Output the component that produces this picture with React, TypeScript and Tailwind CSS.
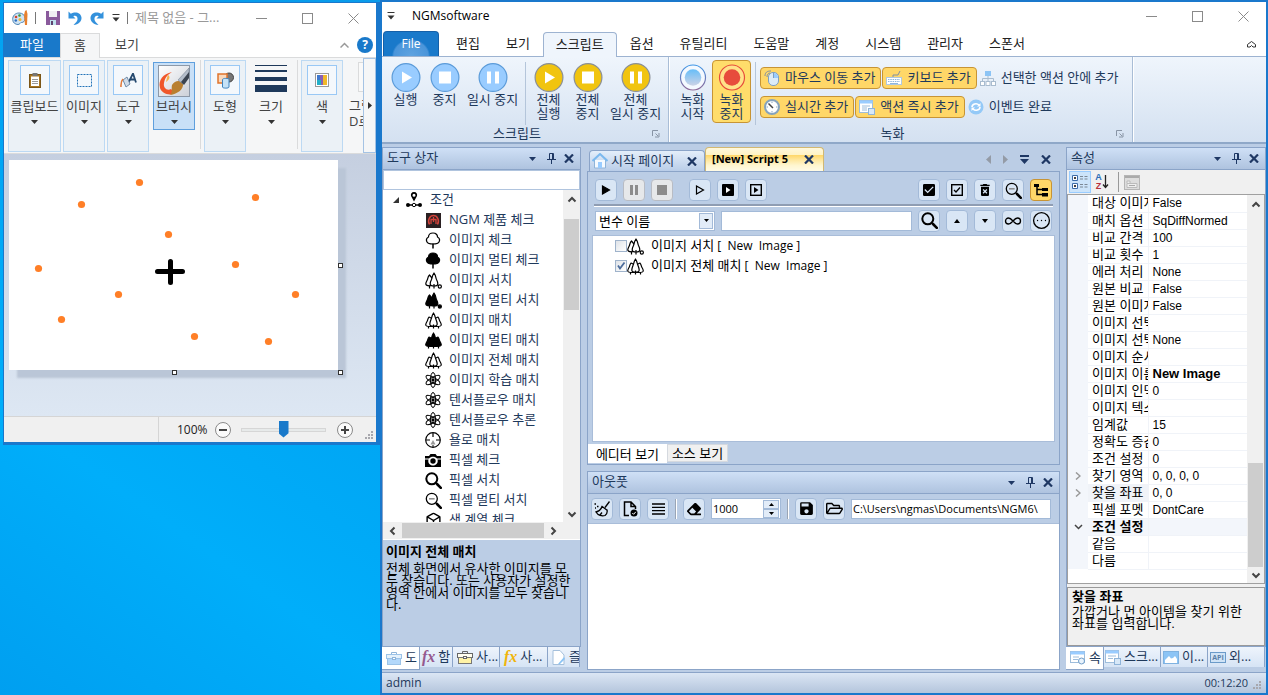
import { useState } from "react";
import type { ReactNode } from "react";
import {
  Box,
  CircleEllipsis,
  Infinity as InfinityIcon,
} from "lucide-react";
import { MdCheckBox, MdDeleteForever, MdSave } from "react-icons/md";
import { FaEraser, FaRegFolderOpen } from "react-icons/fa";

/* ---------- small shared glyphs ---------- */

function CaretDown({ className = "text-[#333]" }: { className?: string }) {
  return (
    <svg width="7" height="4" viewBox="0 0 7 4" className={className}>
      <path d="M0 0H7L3.500 4Z" fill="currentColor" />
    </svg>
  );
}

function QuickAccessArrow() {
  return (
    <svg width="8" height="8" viewBox="0 0 8 8">
      <path d="M0.500 0.500H7.500" stroke="#333" />
      <path d="M0.500 3.500H7.500L4 7.500Z" fill="#333" />
    </svg>
  );
}

function CloseX() {
  return (
    <svg width="10" height="9" viewBox="0 0 10 9">
      <path d="M1 0.500L9 8.500M9 0.500L1 8.500" stroke="#1f3864" strokeWidth="2.200" />
    </svg>
  );
}

function PinIcon() {
  return (
    <svg width="9" height="11" viewBox="0 0 9 11">
      <path d="M2.500 0.500H6.500V6M2.500 0.500V6M0 6.500H9M4.500 7V11M5.500 1V6" stroke="#1f3864" fill="none" />
    </svg>
  );
}

function Chevron({ dir }: { dir: "up" | "down" | "left" | "right" }) {
  const paths = {
    up: "M1.500 6.500L5 3L8.500 6.500",
    down: "M1.500 3.500L5 7L8.500 3.500",
    left: "M6.500 1.500L3 5L6.500 8.500",
    right: "M3.500 1.500L7 5L3.500 8.500",
  };
  return (
    <svg width="10" height="10" viewBox="0 0 10 10" className="flex-none">
      <path d={paths[dir]} fill="none" stroke="#444" strokeWidth="2" />
    </svg>
  );
}

function Magnifier({ minus }: { minus?: boolean }) {
  return (
    <svg width="17" height="17" viewBox="0 0 17 17">
      <circle cx="6.800" cy="6.800" r="5.500" fill="none" stroke="#000" strokeWidth={minus ? 1.3 : 2} />
      <path d="M11 11L12.500 12.500" stroke="#000" strokeWidth="1.500" />
      <path d="M12 12L15.800 15.800" stroke="#000" strokeWidth="2.600" strokeLinecap="round" />
      {minus && <path d="M4 6.800H9.600" stroke="#888" strokeWidth="1.500" />}
    </svg>
  );
}

function Grip() {
  return (
    <svg width="9" height="9" viewBox="0 0 9 9" className="flex-none">
      {[[6, 0], [3, 3], [6, 3], [0, 6], [3, 6], [6, 6]].map(([x, y]) => (
        <rect key={`${x}-${y}`} x={x} y={y} width="2" height="2" fill="#a7a7ad" />
      ))}
    </svg>
  );
}

function WindowButtons() {
  return (
    <div className="flex flex-none items-center">
      <button aria-label="Minimize" className="flex h-7 w-[46px] items-center justify-center">
        <svg width="11" height="11" viewBox="0 0 11 11"><path d="M0 5.500H11" stroke="#8a8a8a" /></svg>
      </button>
      <button aria-label="Maximize" className="flex h-7 w-[46px] items-center justify-center">
        <svg width="11" height="11" viewBox="0 0 11 11"><rect x="0.500" y="0.500" width="10" height="10" fill="none" stroke="#8a8a8a" /></svg>
      </button>
      <button aria-label="Close" className="flex h-7 w-[46px] items-center justify-center">
        <svg width="11" height="11" viewBox="0 0 11 11"><path d="M0.500 0.500L10.500 10.500M10.500 0.500L0.500 10.500" stroke="#8a8a8a" /></svg>
      </button>
    </div>
  );
}

/* ---------- paint window ---------- */

const dots = [
  [72, 44], [130, 22], [246, 37], [159, 74], [29, 108], [226, 104],
  [109, 134], [286, 134], [52, 159], [185, 176], [259, 181],
];

function PaintLogo() {
  return (
    <svg width="17" height="16" viewBox="0 0 17 16">
      <path d="M7 3C3 3 .5 6 .7 9.500C.8 13 3.500 14.500 6 14.500C8 14.500 8 12.500 9.500 12.500C11.500 12.500 13 11 13 8.500C13 5 10.500 3 7 3Z" fill="#cfe3f3" stroke="#4f86b5" />
      <circle cx="4" cy="7" r="1.300" fill="#d5452f" />
      <circle cx="7.500" cy="5.500" r="1.300" fill="#3c9a41" />
      <circle cx="3.800" cy="10.500" r="1.300" fill="#2d6fc4" />
      <circle cx="8" cy="9.500" r="1.500" fill="#f2b632" />
      <path d="M13 1L14.500 0L15.500 4L15 15H13L12 5Z" fill="#e8802e" />
    </svg>
  );
}

function UndoArrow({ flip }: { flip?: boolean }) {
  return (
    <svg width="14" height="14" viewBox="0 0 14 14" className={flip ? "-scale-x-100" : ""}>
      <path d="M0.500 0.500V7.500H7.500L5.300 5.300C7.500 4 10 5.500 9.500 8.500C9.200 10.500 7.500 12 5.500 14C10.500 13.500 13.800 10.500 13.500 6.500C13 1.500 7 0 2.800 2.800Z" fill="#3391dc" />
    </svg>
  );
}

function PaintTool({ label, active, wide, children }: { label: string; active?: boolean; wide?: boolean; children: ReactNode }) {
  return (
    <button
      className={`flex flex-none flex-col items-center border text-[#444] ${wide ? "w-[53px]" : "w-[42px]"} ${
        active
          ? "mx-[2px] mt-[2px] h-[68px] border-[#5f9fdd] bg-[#c9e0f7] pt-[2px]"
          : "h-[92px] border-[#bcd9f3] bg-[#ebf1f6] pt-1"
      }`}
    >
      {children}
      <span className={`block leading-[18px] whitespace-nowrap ${active ? "" : "mt-[2px]"}`}>{label}</span>
      <span className="mt-[5px] block">
        <CaretDown />
      </span>
    </button>
  );
}

function ToolBox({ children }: { children: ReactNode }) {
  return (
    <span className="flex h-[30px] w-[30px] items-center justify-center border border-[#99c8f5] bg-[#f4f8fc]">
      {children}
    </span>
  );
}

function PaintWindow() {
  const [zoom, setZoom] = useState(50);

  return (
    <section className="flex h-[443px] flex-col border-t border-r-4 border-b-3 border-l border-[#1a78cc] bg-white">
      <div className="flex h-[30px] flex-none items-center pl-2">
        <PaintLogo />
        <span className="ml-[6px] h-3 w-px bg-[#777]" />
        <svg width="14" height="14" viewBox="0 0 14 14" className="ml-[10px]">
          <path d="M0 0H14V14H0Z" fill="#8a5a9c" />
          <path d="M3 0H11V6H3Z" fill="#f0edf3" />
          <path d="M4 9H10V14H4Z" fill="#bfe0ee" />
          <path d="M5 10H7V14H5Z" fill="#5d4470" />
        </svg>
        <span className="ml-2"><UndoArrow /></span>
        <span className="ml-2"><UndoArrow flip /></span>
        <span className="ml-2"><QuickAccessArrow /></span>
        <span className="ml-[7px] h-3 w-px bg-[#777]" />
        <span className="ml-[7px] flex-1 whitespace-nowrap text-[#999]">제목 없음 - 그...</span>
        <WindowButtons />
      </div>

      <div className="flex h-[25px] flex-none items-end border-b border-[#dadbdc]">
        <button className="h-6 w-[56px] bg-[#1979ca] pb-px text-white">파일</button>
        <button className="-mb-px h-[25px] w-10 border border-b-0 border-[#dadbdc] bg-[#f5f6f7] text-[#333]">홈</button>
        <button className="h-6 w-[54px] pb-px text-[#444]">보기</button>
        <span className="flex-1" />
        <span className="mr-2 mb-[9px]">
          <svg width="9" height="6" viewBox="0 0 9 6"><path d="M0.500 5.500L4.500 1.500L8.500 5.500" fill="none" stroke="#999" strokeWidth="1.500" /></svg>
        </span>
        <button aria-label="도움말" className="mr-[3px] mb-1 h-4 w-4 rounded-full bg-[#1979ca] text-xs leading-4 font-bold text-white">?</button>
      </div>

      <div className="flex h-24 flex-none overflow-hidden border-b border-[#dadbdc] bg-[#f5f6f7]">
        <div className="flex min-w-0 flex-1 gap-[2px] overflow-hidden pt-[2px] pl-1">
          <PaintTool label="클립보드" wide>
            <ToolBox>
              <svg width="12" height="15" viewBox="0 0 12 15">
                <rect x="0.500" y="1.500" width="11" height="13" fill="#a8741f" stroke="#7c5717" />
                <rect x="2" y="3.500" width="8" height="9.500" fill="#fff" />
                <path d="M3 6.500H9M3 8.500H9M3 10.500H9" stroke="#9a9a9a" />
                <rect x="3.500" y="0" width="5" height="3" fill="#777" />
              </svg>
            </ToolBox>
          </PaintTool>
          <PaintTool label="이미지">
            <ToolBox>
              <svg width="15" height="13" viewBox="0 0 15 13"><rect x="0.500" y="0.500" width="14" height="12" fill="none" stroke="#2273b8" strokeDasharray="2 1" /></svg>
            </ToolBox>
          </PaintTool>
          <PaintTool label="도구">
            <ToolBox>
              <svg width="17" height="15" viewBox="0 0 17 15">
                <path d="M8.500 9.500L13 0.500L16 9.500M10.500 6.500H15" stroke="#24496f" strokeWidth="1.800" fill="none" />
                <path d="M3 7L7 4L10 11L6 14Z" fill="#cfdbe8" stroke="#6f8ba8" />
                <path d="M3 6C1 8 .8 11 1 14" stroke="#e37a3a" strokeWidth="1.600" fill="none" />
              </svg>
            </ToolBox>
          </PaintTool>
          <PaintTool label="브러시" active>
            <svg width="32" height="32" viewBox="0 0 32 32">
              <defs>
                <linearGradient id="brushBg" x1="0" y1="0" x2="1" y2="1">
                  <stop offset="0" stopColor="#fff" />
                  <stop offset="1" stopColor="#ccd0d8" />
                </linearGradient>
              </defs>
              <rect x="0.500" y="0.500" width="31" height="31" fill="url(#brushBg)" stroke="#8c98a8" />
              <path d="M14 7C5 9 0 15 2 23C4 29 12 31 17 28L13 24C9 26 5 23 6 18C7 13 9 10 14 7Z" fill="#f0572b" />
              <path d="M10 10C13 12 11 15 8 17C9 13 9 12 10 10Z" fill="#f8b04a" />
              <path d="M14 20C17 15 22 15 25 18C26 24 20 29 12 30C15 27 13 24 14 20Z" fill="#b97f30" />
              <path d="M20 15L31 3V11L25 19Z" fill="#b4bdca" stroke="#6d7889" strokeWidth=".5" />
              <path d="M23 17L31 7V13L26 20Z" fill="#3b4451" />
            </svg>
          </PaintTool>
          <span className="mx-px mb-1 w-px flex-none bg-[#dadbdc]" />
          <PaintTool label="도형">
            <ToolBox>
              <svg width="17" height="17" viewBox="0 0 17 17">
                <circle cx="12" cy="5.500" r="4.500" fill="#777" stroke="#444" />
                <rect x="1" y="2" width="9" height="9" fill="#f9d9bd" stroke="#e0742c" strokeWidth="1.500" />
                <path d="M5.500 7.500C5.500 6 12 6 12 7.500V15C12 16.500 5.500 16.500 5.500 15Z" fill="#c5e2f7" stroke="#3f83bd" />
              </svg>
            </ToolBox>
          </PaintTool>
          <button className="flex h-[92px] w-[46px] flex-none flex-col items-center pt-1 text-[#444]">
            <svg width="32" height="29" viewBox="0 0 32 29">
              <path d="M0 1H32V2H0ZM0 6H32V8H0ZM0 13H32V17H0ZM0 21H32V28H0Z" fill="#1e395b" />
            </svg>
            <span className="mt-1 block leading-[18px]">크기</span>
            <span className="mt-[5px] block"><CaretDown /></span>
          </button>
          <span className="mx-px mb-1 w-px flex-none bg-[#dadbdc]" />
          <PaintTool label="색">
            <ToolBox>
              <svg width="14" height="14" viewBox="0 0 14 14">
                <rect x="0.500" y="0.500" width="13" height="13" fill="#fff" stroke="#999" />
                <path d="M2 2H5V11H2Z" fill="#3f79cf" />
                <path d="M5 2H8V12H5Z" fill="#8b5fb3" />
                <path d="M8 2H12V12H8Z" fill="#f0b92a" />
                <path d="M2 7H6V12H2Z" fill="#22b0c9" />
              </svg>
            </ToolBox>
          </PaintTool>
          <button className="mt-[2px] ml-1 flex w-[50px] flex-none flex-col items-start text-left leading-4 text-[#444]">
            <span className="ml-[9px] h-[30px] w-[30px] border border-[#dadbdc] bg-[#f9f9f9]" />
            <span className="mt-[5px]">그림판</span>
            <span>D로</span>
          </button>
        </div>
        <button aria-label="다음" className="flex w-[13px] flex-none items-center justify-center border border-[#a5c3e4] bg-[#f5f6f7]">
          <svg width="4" height="7" viewBox="0 0 4 7"><path d="M0 0L4 3.500L0 7Z" fill="#333" /></svg>
        </button>
      </div>

      <div className="min-h-0 flex-1 bg-linear-to-b from-[#c5cfe0] to-[#dde7f3] pt-[6px] pl-[5px]">
        <div className="relative w-[329px] bg-white shadow-[8px_8px_2px_#bac6d7]">
          <svg width="329" height="210" viewBox="0 0 329 210" className="block">
            <rect width="329" height="210" fill="#fff" />
            {dots.map(([x, y]) => (
              <circle key={`${x}-${y}`} cx={x + 0.5} cy={y + 0.5} r="3.600" fill="#ff7f27" />
            ))}
            <path d="M148.500 111.500H173.500M161.500 101.500V122.500" stroke="#000" strokeWidth="5" strokeLinecap="round" />
          </svg>
          <span className="absolute top-[103px] -right-[5px] h-[5px] w-[5px] border border-[#333] bg-white" />
          <span className="absolute -right-[5px] -bottom-[5px] h-[5px] w-[5px] border border-[#333] bg-white" />
          <span className="absolute -bottom-[5px] left-[163px] h-[5px] w-[5px] border border-[#333] bg-white" />
        </div>
      </div>

      <div className="flex h-[26px] flex-none items-center border-t border-[#d5d5d5] bg-[#f0f0f0]">
        <span className="w-[154px] flex-none" />
        <span className="h-full w-px bg-[#d5d5d5]" />
        <span className="ml-[18px] w-[38px] text-xs text-[#222]">100%</span>
        <button aria-label="축소">
          <svg width="16" height="16" viewBox="0 0 16 16">
            <circle cx="8" cy="8" r="7.500" fill="#fafafa" stroke="#8a8a8a" />
            <path d="M4 8H12" stroke="#444" strokeWidth="2" />
          </svg>
        </button>
        <input
          type="range"
          aria-label="확대/축소"
          value={zoom}
          onChange={(e) => setZoom(Number(e.target.value))}
          className="ml-[10px] h-[18px] w-[85px] appearance-none bg-transparent [&::-webkit-slider-runnable-track]:h-1 [&::-webkit-slider-runnable-track]:border [&::-webkit-slider-runnable-track]:border-[#d6d6d6] [&::-webkit-slider-runnable-track]:bg-[#e7eaea] [&::-webkit-slider-thumb]:-mt-2 [&::-webkit-slider-thumb]:h-[17px] [&::-webkit-slider-thumb]:w-[10px] [&::-webkit-slider-thumb]:appearance-none [&::-webkit-slider-thumb]:bg-[#1979ca] [&::-webkit-slider-thumb]:[clip-path:polygon(0_0,100%_0,100%_75%,50%_100%,0_75%)]"
        />
        <button aria-label="확대" className="ml-[11px]">
          <svg width="16" height="16" viewBox="0 0 16 16">
            <circle cx="8" cy="8" r="7.500" fill="#fafafa" stroke="#8a8a8a" />
            <path d="M4 8H12M8 4V12" stroke="#444" strokeWidth="2" />
          </svg>
        </button>
        <span className="flex-1" />
        <span className="mr-[2px] self-end pb-[2px]"><Grip /></span>
      </div>
    </section>
  );
}

/* ---------- ribbon ---------- */

const menuTabs = ["편집", "보기", "스크립트", "옵션", "유틸리티", "도움말", "계정", "시스템", "관리자", "스폰서"];

type Shape = "play" | "stop" | "pause";

function RoundIcon({ shape, yellow }: { shape: Shape; yellow?: boolean }) {
  return (
    <svg width="30" height="29" viewBox="0 0 30 29" className="flex-none">
      <circle cx="15" cy="14.500" r="13.900" fill={yellow ? "#f1c40f" : "#99ccff"} stroke={yellow ? "#8a8f96" : "#5b9bd9"} strokeWidth="1.200" />
      {shape === "play" && <path d="M11 8.500L21 14.500L11 20.500Z" fill="#fff" />}
      {shape === "stop" && <rect x="9" y="8.500" width="12" height="12" fill="#fff" />}
      {shape === "pause" && <path d="M9 8.500H13V20.500H9ZM17 8.500H21V20.500H17Z" fill="#fff" />}
    </svg>
  );
}

function RecordIcon({ on }: { on?: boolean }) {
  return (
    <svg width="30" height="29" viewBox="0 0 30 29" className="flex-none">
      <defs>
        <linearGradient id="recIdle" x1="0" y1="0" x2="0" y2="1">
          <stop offset="0" stopColor="#66bdf8" />
          <stop offset="1" stopColor="#cdd3e6" />
        </linearGradient>
        <linearGradient id="recRing" x1="0" y1="0" x2="0" y2="1">
          <stop offset="0" stopColor="#3f97e8" />
          <stop offset="1" stopColor="#8f6796" />
        </linearGradient>
      </defs>
      <circle cx="15" cy="14.500" r="12.500" fill={on ? "#ffe289" : "#f4f9ff"} stroke={on ? "#e74c3c" : "url(#recRing)"} strokeWidth="1.200" />
      <circle cx="15" cy="14.500" r="8.300" fill={on ? "#e74c3c" : "url(#recIdle)"} />
    </svg>
  );
}

function BigButton({ lines, wide, active, children }: { lines: string[]; wide?: boolean; active?: boolean; children: ReactNode }) {
  return (
    <button
      className={`flex h-[63px] flex-none flex-col items-center rounded-sm border pt-[2px] leading-[14px] whitespace-nowrap text-[#1e395b] ${
        wide ? "w-[57px]" : "w-[39px]"
      } ${active ? "border-[#c79435] bg-[#ffdd6b]" : "border-transparent"}`}
    >
      {children}
      <span className="block">
        {lines.map((line) => (
          <span key={line} className="block">{line}</span>
        ))}
      </span>
    </button>
  );
}

function SmallButton({ label, active, children }: { label: string; active?: boolean; children: ReactNode }) {
  return (
    <button
      className={`flex h-[22px] flex-none items-center gap-[5px] rounded-sm border whitespace-nowrap text-[#1e395b] ${
        active ? "border-[#c79435] bg-[#ffd768] pr-[5px] pl-[3px]" : "border-transparent px-px"
      }`}
    >
      {children}
      {label}
    </button>
  );
}

function Launcher() {
  return (
    <button aria-label="옵션 더 보기">
      <svg width="8" height="8" viewBox="0 0 8 8">
        <path d="M0.500 6V0.500H6M3.500 3.500L6 6M7 3V7H3" fill="none" stroke="#8894a5" />
      </svg>
    </button>
  );
}

function Divider() {
  return <span className="mt-[2px] h-[63px] w-px flex-none bg-[#b4c5da]" />;
}

function Ribbon() {
  return (
    <div className="flex h-[87px] flex-none border-b-2 border-[#8fa8c8] bg-linear-to-b from-[#eff5fc] to-[#d4e1f1] text-[#1e395b]">
      <div className="flex w-[287px] flex-none flex-col border-r border-[#a9bdd6] shadow-[1px_0_0_#fff]">
        <div className="flex flex-1 pt-[3px] pl-1">
          <BigButton lines={["실행"]}><RoundIcon shape="play" /></BigButton>
          <BigButton lines={["중지"]}><RoundIcon shape="stop" /></BigButton>
          <BigButton lines={["일시 중지"]} wide><RoundIcon shape="pause" /></BigButton>
          <span className="w-1" />
          <Divider />
          <span className="w-[3px]" />
          <BigButton lines={["전체", "실행"]}><RoundIcon shape="play" yellow /></BigButton>
          <BigButton lines={["전체", "중지"]}><RoundIcon shape="stop" yellow /></BigButton>
          <BigButton lines={["전체", "일시 중지"]} wide><RoundIcon shape="pause" yellow /></BigButton>
        </div>
        <div className="flex h-[18px] items-center pr-2">
          <span className="flex-1 text-center">스크립트</span>
          <Launcher />
        </div>
      </div>

      <div className="flex w-[464px] flex-none flex-col border-r border-[#a9bdd6] shadow-[1px_0_0_#fff]">
        <div className="flex flex-1 pt-[3px] pl-1">
          <BigButton lines={["녹화", "시작"]}><RecordIcon /></BigButton>
          <BigButton lines={["녹화", "중지"]} active><RecordIcon on /></BigButton>
          <span className="w-1" />
          <Divider />
          <div className="flex flex-col gap-[7px] pt-[7px] pl-1">
            <div className="flex gap-px">
              <SmallButton label="마우스 이동 추가" active>
                <svg width="16" height="16" viewBox="0 0 16 16">
                  <rect x="4.500" y="2.500" width="10" height="13" rx="4.500" fill="#dcebf8" stroke="#7f9fc0" />
                  <path d="M9.500 3V8H14C14 5 12.500 3 9.500 3Z" fill="#99ccff" />
                  <path d="M9.500 2.500V8" stroke="#7f9fc0" />
                  <path d="M1 6C1 2.500 3 1 7 1M3 7C3 5 4 3 6 3" stroke="#7f8fa5" fill="none" />
                </svg>
              </SmallButton>
              <SmallButton label="키보드 추가" active>
                <svg width="16" height="16" viewBox="0 0 16 16">
                  <path d="M7 7V5H12L14 1" stroke="#7f8fa5" fill="none" />
                  <rect x="0.500" y="7.500" width="15" height="7" fill="#fff" stroke="#b0c8e0" />
                  <path d="M2 9.500H14M2 11.500H14" stroke="#8eb6dc" strokeDasharray="1.500 .8" />
                  <path d="M4 13.500H12" stroke="#8eb6dc" />
                </svg>
              </SmallButton>
              <SmallButton label="선택한 액션 안에 추가">
                <svg width="16" height="16" viewBox="0 0 16 16">
                  <rect x="5" y="1" width="6" height="5" fill="#8cc4f5" />
                  <path d="M8 6V9M2.500 11V8.500H13.500V11M8 9V11" stroke="#a9bccf" fill="none" />
                  <rect x="0.500" y="11.500" width="4" height="4" fill="#fff" stroke="#a9bccf" />
                  <rect x="6" y="11.500" width="4" height="4" fill="#fff" stroke="#a9bccf" />
                  <rect x="11.500" y="11.500" width="4" height="4" fill="#fff" stroke="#a9bccf" />
                </svg>
              </SmallButton>
            </div>
            <div className="flex gap-px">
              <SmallButton label="실시간 추가" active>
                <svg width="16" height="16" viewBox="0 0 16 16">
                  <circle cx="8" cy="8" r="7" fill="#fff" stroke="#86a3bd" strokeWidth="2" />
                  <path d="M4.500 4.500L9 9" stroke="#444" strokeWidth="1.500" />
                  <path d="M8 2.500V4M13.500 8H12M8 13.500V12M2.500 8H4" stroke="#86a3bd" />
                </svg>
              </SmallButton>
              <SmallButton label="액션 즉시 추가" active>
                <svg width="16" height="16" viewBox="0 0 16 16">
                  <rect x="0.500" y="1.500" width="13" height="12" fill="#fff" stroke="#9ebddb" />
                  <rect x="0.500" y="1.500" width="13" height="3" fill="#99ccff" />
                  <path d="M3 7H11M3 9H8M3 11H8" stroke="#9ebddb" />
                  <rect x="9.500" y="9.500" width="6" height="6" fill="#d7e8f8" stroke="#8fb4d9" />
                </svg>
              </SmallButton>
              <SmallButton label="이벤트 완료">
                <svg width="16" height="16" viewBox="0 0 16 16">
                  <circle cx="8" cy="8" r="7.500" fill="#94c9f7" />
                  <path d="M4 8C4 5 8.500 3.500 11 6M12 8C12 11 7.500 12.500 5 10" stroke="#fff" strokeWidth="1.600" fill="none" />
                  <path d="M12.500 4V7.500H9ZM3.500 12V8.500H7Z" fill="#fff" />
                </svg>
              </SmallButton>
            </div>
          </div>
        </div>
        <div className="flex h-[18px] items-center pr-2">
          <span className="flex-1 text-center">녹화</span>
          <Launcher />
        </div>
      </div>
    </div>
  );
}

/* ---------- docked panels ---------- */

function PanelHeader({ title }: { title: string }) {
  return (
    <div className="flex h-[22px] flex-none items-center border-b border-[#8ba4c8] bg-linear-to-b from-[#cfe0f6] to-[#afc3df] pr-[6px] pl-1 text-[#1e395b]">
      <span className="flex-1 pb-px">{title}</span>
      <button aria-label="메뉴" className="mr-[11px]"><CaretDown className="text-[#1f3864]" /></button>
      <button aria-label="고정" className="mr-2"><PinIcon /></button>
      <button aria-label="닫기"><CloseX /></button>
    </div>
  );
}

function Pines({ filled, mode }: { filled?: boolean; mode: "search" | "match" }) {
  const fill = filled ? "#000" : "#fff";
  return (
    <svg width="17" height="17" viewBox="0 0 17 17" className="flex-none">
      {mode === "search" ? (
        <g fill={fill} stroke="#000" strokeWidth="1.200" strokeLinejoin="round">
          <path d="M4.500 3C2.500 5 3.200 6 2.200 8C1.500 9.500 .8 10.500 .8 11.800C.8 13.200 2.500 13.800 4.500 13.800C6 13.800 7 13 7 12V6Z" />
          <path d="M4.500 13.500V16.500" />
          <path d="M9 1C6.800 4 7.500 5.500 6.500 7.500C5.700 9 5.200 10.500 5.200 12C5.200 13.500 7 14 9 14C11 14 12.800 13.500 12.800 12C12.800 10.500 12.300 9 11.500 7.500C10.500 5.500 11.200 4 9 1Z" />
          <path d="M9 12V16.500" />
          <circle cx="14.800" cy="14.500" r="1.600" />
        </g>
      ) : (
        <g fill={fill} stroke="#000" strokeWidth="1.200" strokeLinejoin="round">
          <path d="M4 5C2.500 7 3 8 2 9.500C1 11 .7 12 .7 13C1 14.500 3 14.500 5 14.500H8V7Z" />
          <path d="M13 5C14.500 7 14 8 15 9.500C16 11 16.300 12 16.300 13C16 14.500 14 14.500 12 14.500H9V7Z" />
          <path d="M8.500 1C6.500 4 7 5.500 6 7.500C5.200 9.500 4.800 10.500 4.800 12C4.800 13.800 6.500 14.200 8.500 14.200C10.500 14.200 12.200 13.800 12.200 12C12.200 10.500 11.800 9.500 11 7.500C10 5.500 10.500 4 8.500 1Z" />
          <path d="M8.500 12.500V16.500M3.500 14V16.500M13.500 14V16.500" />
        </g>
      )}
    </svg>
  );
}

function RoundTree({ filled }: { filled?: boolean }) {
  return (
    <svg width="16" height="17" viewBox="0 0 16 17">
      <path d="M8 1C5 1 3.500 3 3.500 5C1.500 6 1 8 2 10C3 12 6 12 8 12C10 12 13 12 14 10C15 8 14.500 6 12.500 5C12.500 3 11 1 8 1Z" fill={filled ? "#000" : "#fff"} stroke="#000" strokeWidth="1.200" />
      <path d="M8 11.500V16.500" stroke="#000" strokeWidth="1.500" />
    </svg>
  );
}

function AtomIcon() {
  return (
    <svg width="16" height="16" viewBox="0 0 16 16" fill="none" stroke="#000" strokeWidth="1">
      <ellipse cx="8" cy="8" rx="2.600" ry="7.500" />
      <ellipse cx="8" cy="8" rx="2.600" ry="7.800" transform="rotate(60 8 8)" />
      <ellipse cx="8" cy="8" rx="2.600" ry="7.800" transform="rotate(-60 8 8)" />
      <circle cx="8" cy="8" r="1.200" fill="#000" />
    </svg>
  );
}

const toolItems: { label: string; icon: ReactNode }[] = [
  {
    label: "NGM 제품 체크",
    icon: (
      <svg width="15" height="15" viewBox="0 0 15 15">
        <rect width="15" height="15" fill="#2a2022" />
        <path d="M3.500 11.500C1 7 4 2.500 7.500 2.500C11 2.500 14 7 11.500 11.500" stroke="#d4433b" strokeWidth="1.500" fill="none" />
        <path d="M5 11V6.500H10V11M7.500 4V9" stroke="#d4433b" strokeWidth="1.300" fill="none" />
      </svg>
    ),
  },
  { label: "이미지 체크", icon: <RoundTree /> },
  { label: "이미지 멀티 체크", icon: <RoundTree filled /> },
  { label: "이미지 서치", icon: <Pines mode="search" /> },
  { label: "이미지 멀티 서치", icon: <Pines mode="search" filled /> },
  { label: "이미지 매치", icon: <Pines mode="match" /> },
  { label: "이미지 멀티 매치", icon: <Pines mode="match" filled /> },
  { label: "이미지 전체 매치", icon: <Pines mode="match" /> },
  { label: "이미지 학습 매치", icon: <AtomIcon /> },
  { label: "텐서플로우 매치", icon: <AtomIcon /> },
  { label: "텐서플로우 추론", icon: <AtomIcon /> },
  {
    label: "욜로 매치",
    icon: (
      <svg width="16" height="16" viewBox="0 0 16 16">
        <circle cx="8" cy="8" r="7.300" fill="#fff" stroke="#000" strokeWidth="1.200" />
        <path d="M8 1V5M1 8H5M11 8H15" stroke="#000" strokeWidth="1.200" />
        <path d="M8 8L10.500 12.500H5.500Z" fill="#999" />
        <path d="M8 13V15" stroke="#000" />
      </svg>
    ),
  },
  {
    label: "픽셀 체크",
    icon: (
      <svg width="16" height="13" viewBox="0 0 16 13">
        <path d="M0 2H4L5.500 0H10.500L12 2H16V4.500H12C10 2 6 2 4 4.500H0Z" fill="#000" />
        <path d="M0 5.500H3.500C2.500 9 5 11.500 8 11.500C11 11.500 13.500 9 12.500 5.500H16V13H0Z" fill="#000" />
        <circle cx="8" cy="7" r="2.700" fill="#000" />
      </svg>
    ),
  },
  { label: "픽셀 서치", icon: <Magnifier /> },
  { label: "픽셀 멀티 서치", icon: <Magnifier minus /> },
  { label: "색 계열 체크", icon: <Box size={17} color="#000" /> },
];

function Briefcase({ gold }: { gold?: boolean }) {
  return (
    <svg width="16" height="14" viewBox="0 0 16 14" className="flex-none">
      <path d="M5.500 4V1.500H10.500V4" fill="none" stroke={gold ? "#666" : "#8fb4d9"} />
      <rect x="0.500" y="3.500" width="15" height="4" fill={gold ? "#fffef0" : "#e5f1fb"} stroke={gold ? "#666" : "#9cc3e8"} />
      <rect x="1.500" y="7.500" width="13" height="6" fill={gold ? "#fff3a6" : "#b3d8fb"} stroke={gold ? "#777" : "#9cc3e8"} />
      <rect x="6.500" y="6.500" width="3" height="2" fill="#fff" stroke={gold ? "#666" : "#8fb4d9"} />
    </svg>
  );
}

function BottomTab({ label, active, className, children }: { label: string; active?: boolean; className: string; children: ReactNode }) {
  return (
    <button
      className={`flex items-center gap-[3px] overflow-hidden border-r border-[#8ba4c8] pl-1 whitespace-nowrap text-[#1e395b] ${className} ${
        active ? "h-[23px] border-b bg-white" : "h-[20px] bg-linear-to-b from-[#eef4fc] to-[#d6e4f5]"
      }`}
    >
      {children}
      <span>{label}</span>
    </button>
  );
}

function Toolbox() {
  const [keyword, setKeyword] = useState("");

  return (
    <section className="flex w-[199px] flex-none flex-col">
      <div className="flex min-h-0 flex-1 flex-col border border-[#8ba4c8] bg-[#bbcde5]">
        <PanelHeader title="도구 상자" />
        <input
          aria-label="도구 검색"
          value={keyword}
          onChange={(e) => setKeyword(e.target.value)}
          className="h-[20px] w-full flex-none border border-[#b0c4de] bg-white px-1 outline-none"
        />
        <div className="flex min-h-0 flex-1 bg-[#f0f0f0]">
          <div className="flex min-w-0 flex-1 flex-col">
            <ul className="min-h-0 flex-1 overflow-hidden bg-white text-[#1e395b]">
              <li className="flex h-5 items-center pl-[10px]">
                <svg width="6" height="6" viewBox="0 0 6 6"><path d="M6 0V6H0Z" fill="#333" /></svg>
                <svg width="16" height="16" viewBox="0 0 16 16" className="ml-[7px]">
                  <path d="M8 0C5.500 0 4.500 2 5 4L8 9.500L11 4C11.500 2 10.500 0 8 0ZM8 1.800A1.500 1.500 0 1 1 8 4.800A1.500 1.500 0 1 1 8 1.800Z" fill="#000" />
                  <path d="M2 13H14" stroke="#000" strokeWidth="1.500" />
                  <circle cx="2" cy="13" r="2" /><circle cx="8" cy="13" r="1.700" fill="#fff" stroke="#000" /><circle cx="14" cy="13" r="2" />
                </svg>
                <span className="ml-2">조건</span>
              </li>
              {toolItems.map((item) => (
                <li key={item.label} className="flex h-5 items-center pl-[41px] whitespace-nowrap">
                  <span className="flex w-[18px] flex-none justify-center">{item.icon}</span>
                  <span className="ml-[7px]">{item.label}</span>
                </li>
              ))}
            </ul>
            <div className="flex h-[17px] flex-none items-center gap-1 px-[5px]">
              <Chevron dir="left" />
              <span className="h-[15px] min-w-0 flex-1 bg-[#cdcdcd]" />
              <Chevron dir="right" />
            </div>
          </div>
          <div className="flex w-[17px] flex-none flex-col items-center pt-[5px] pb-[20px]">
            <Chevron dir="up" />
            <span className="mt-[14px] h-[91px] w-[15px] bg-[#cdcdcd]" />
            <span className="flex-1" />
            <Chevron dir="down" />
          </div>
        </div>
        <div className="h-[107px] flex-none border-t border-white pt-[2px] pr-[6px] pl-[3px] text-black">
          <h3 className="leading-[18px] font-bold">이미지 전체 매치</h3>
          <p className="pt-[2px] leading-3">
            전체 화면에서 유사한 이미지를 모두 찾습니다. 또는 사용자가 설정한 영역 안에서 이미지를 모두 찾습니다.
          </p>
        </div>
      </div>
      <div className="flex h-[23px] flex-none overflow-hidden">
        <BottomTab label="도" active className="w-[38px]"><Briefcase /></BottomTab>
        <BottomTab label="함" className="w-[33px] pl-[2px]!">
          <span className="font-['Liberation_Serif'] text-[16px] leading-4 font-bold text-[#95598f] italic">fx</span>
        </BottomTab>
        <BottomTab label="사..." className="w-[47px]"><Briefcase gold /></BottomTab>
        <BottomTab label="사..." className="w-12">
          <span className="font-['Liberation_Serif'] text-[16px] leading-4 font-bold text-[#f0b50b] italic">fx</span>
        </BottomTab>
        <BottomTab label="즐겨찾기" className="w-[32px]">
          <svg width="14" height="15" viewBox="0 0 14 15" className="flex-none">
            <path d="M1 0.500H8L12 5V14.500H1Z" fill="#fff" stroke="#a5c0dc" />
            <path d="M12 7L13 9L8 14H6Z" fill="#8cc4f5" />
          </svg>
        </BottomTab>
      </div>
    </section>
  );
}

/* ---------- editor ---------- */

function IconButton({ label, active, disabled, children }: { label: string; active?: boolean; disabled?: boolean; children: ReactNode }) {
  let color = "border-[#a3bad8] bg-[#d9e6f5]";
  if (active) color = "border-[#c79435] bg-[#ffd768]";
  if (disabled) color = "border-[#b8bcc4] bg-[#e6e8ea]";
  return (
    <button aria-label={label} className={`flex h-[22px] w-[22px] flex-none items-center justify-center rounded-sm border text-black ${color}`}>
      {children}
    </button>
  );
}

function PlayGlyph({ outline }: { outline?: boolean }) {
  return (
    <svg width="10" height="10" viewBox="0 0 10 10">
      <path d="M1.500 1L8.500 5L1.500 9Z" fill={outline ? "none" : "#000"} stroke="#000" strokeWidth="1.200" />
    </svg>
  );
}

function TreeGlyph() {
  return (
    <svg width="14" height="13" viewBox="0 0 14 13">
      <path d="M0 0H5V3H0ZM8 4H14V7H8ZM8 9H14V12.500H8Z" fill="#000" />
      <path d="M3 3V10.500H8M3 5.500H8" stroke="#000" strokeWidth="1.500" fill="none" />
    </svg>
  );
}

function ScriptRow({ title, checked }: { title: string; checked?: boolean }) {
  const [on, setOn] = useState(!!checked);
  return (
    <label className="flex h-5 items-center pl-[22px] whitespace-pre text-black">
      <span className="relative flex h-3 w-3">
        <input
          type="checkbox"
          checked={on}
          onChange={() => setOn(!on)}
          className="h-3 w-3 appearance-none border border-[#9fb3cb] bg-linear-to-br from-[#dfe3e8] to-white"
        />
        {on && (
          <svg width="12" height="12" viewBox="0 0 12 12" className="absolute inset-0">
            <path d="M3 5.500L5 8.500L9.500 2.500" fill="none" stroke="#4b6c9c" strokeWidth="1.800" />
          </svg>
        )}
      </span>
      <Pines mode={checked ? "match" : "search"} />
      <span className="ml-[7px]">{title}</span>
      <span className="text-xs"> [  New  Image ]</span>
    </label>
  );
}

function ScriptEditor() {
  const [field, setField] = useState("변수 이름");
  const [query, setQuery] = useState("");

  return (
    <section className="flex min-h-0 flex-1 flex-col">
      <div className="flex h-6 flex-none items-end pr-[9px] pl-[2px]">
        <button className="flex h-[21px] w-[116px] items-center rounded-t border border-b-0 border-[#8ba4c8] bg-linear-to-b from-[#e4eefa] to-[#b9cde8] pl-[2px] whitespace-nowrap text-[#1e395b]">
          <svg width="16" height="16" viewBox="0 0 16 16" className="flex-none">
            <path d="M2.500 7V15H13.500V7" fill="#f5faff" stroke="#8fb4d9" />
            <path d="M0.500 8L8 1L15.500 8" fill="none" stroke="#7cb9ee" strokeWidth="2" />
            <rect x="6" y="9" width="4" height="6" fill="#99ccff" />
          </svg>
          <span className="ml-[3px] flex-1 text-left">시작 페이지</span>
          <span className="mr-[7px]"><CloseX /></span>
        </button>
        <button className="flex h-6 w-[119px] items-center rounded-t border border-b-0 border-[#d2b872] bg-[linear-gradient(#fff8dc_0%,#fff3c4_30%,#ffd768_31%,#ffe699_50%,#fff6cf_75%,#fffbe6_100%)] pl-[6px] whitespace-nowrap text-black">
          <span className="flex-1 text-left text-[11px] font-bold">[New] Script 5</span>
          <span className="mr-[9px]"><CloseX /></span>
        </button>
        <span className="flex-1" />
        <div className="flex items-center gap-3 self-center">
          <svg width="5" height="9" viewBox="0 0 5 9"><path d="M5 0V9L0 4.500Z" fill="#949ba6" /></svg>
          <svg width="5" height="9" viewBox="0 0 5 9"><path d="M0 0V9L5 4.500Z" fill="#949ba6" /></svg>
          <svg width="9" height="9" viewBox="0 0 9 9"><path d="M0 0H9V2H0ZM0 4H9L4.500 9Z" fill="#1f3864" /></svg>
          <CloseX />
        </div>
      </div>

      <div className="flex min-h-0 flex-1 flex-col border border-[#8ba4c8] bg-[#bbcde5]">
        <div className="mx-[6px] flex h-[34px] flex-none items-end gap-[6px] border-b-2 border-[#8f9db3] px-px pb-[3px] shadow-[0_1px_0_#fff]">
          <IconButton label="실행"><PlayGlyph /></IconButton>
          <IconButton label="일시 중지" disabled>
            <svg width="8" height="10" viewBox="0 0 8 10"><path d="M0 0H3V10H0ZM5 0H8V10H5Z" fill="#8c8c8c" /></svg>
          </IconButton>
          <IconButton label="중지" disabled><span className="h-[10px] w-[10px] bg-[#8c8c8c]" /></IconButton>
          <span className="w-1" />
          <IconButton label="단계 실행"><PlayGlyph outline /></IconButton>
          <IconButton label="선택 실행">
            <svg width="12" height="12" viewBox="0 0 12 12"><rect width="12" height="12" rx="1" /><path d="M4 3L8.500 6L4 9Z" fill="#fff" /></svg>
          </IconButton>
          <IconButton label="여기부터 실행">
            <svg width="12" height="12" viewBox="0 0 12 12"><rect x="0.700" y="0.700" width="10.600" height="10.600" fill="none" stroke="#000" strokeWidth="1.400" /><path d="M4 3L8.500 6L4 9Z" /></svg>
          </IconButton>
          <span className="flex-1" />
          <IconButton label="전체 선택"><MdCheckBox size={16} /></IconButton>
          <IconButton label="선택 해제">
            <svg width="12" height="12" viewBox="0 0 12 12" fill="none" stroke="#000"><rect x="0.700" y="0.700" width="10.600" height="10.600" strokeWidth="1.400" /><path d="M3 6L5 8L9 3.500" strokeWidth="1.300" /></svg>
          </IconButton>
          <IconButton label="삭제"><MdDeleteForever size={16} /></IconButton>
          <IconButton label="축소"><Magnifier minus /></IconButton>
          <IconButton label="트리" active><TreeGlyph /></IconButton>
        </div>

        <div className="mx-[6px] flex h-[29px] flex-none items-center gap-[6px] px-px">
          <div className="relative h-5 w-[120px] flex-none">
            <select
              aria-label="검색 필드"
              value={field}
              onChange={(e) => setField(e.target.value)}
              className="h-5 w-full appearance-none border border-[#a3bad8] bg-white pl-[3px] leading-[18px] text-black"
            >
              <option>변수 이름</option>
              <option>액션 이름</option>
            </select>
            <span className="pointer-events-none absolute top-[2px] right-[2px] flex h-4 w-[14px] items-center justify-center border border-[#a3bad8] bg-[#e2ecf8]">
              <svg width="5" height="3" viewBox="0 0 5 3"><path d="M0 0H5L2.500 3Z" /></svg>
            </span>
          </div>
          <input
            aria-label="검색어"
            value={query}
            onChange={(e) => setQuery(e.target.value)}
            className="h-5 min-w-0 flex-1 border border-[#a3bad8] bg-white px-1 outline-none"
          />
          <IconButton label="검색"><Magnifier /></IconButton>
          <IconButton label="이전"><svg width="6" height="4" viewBox="0 0 6 4"><path d="M3 0L6 4H0Z" /></svg></IconButton>
          <IconButton label="다음"><svg width="6" height="4" viewBox="0 0 6 4"><path d="M0 0H6L3 4Z" /></svg></IconButton>
          <IconButton label="반복"><InfinityIcon size={18} strokeWidth={1.8} /></IconButton>
          <IconButton label="더 보기"><CircleEllipsis size={19} strokeWidth={1.7} /></IconButton>
        </div>

        <div className="mx-1 min-h-0 flex-1 border border-[#a9bdd9] bg-white">
          <ScriptRow title="이미지 서치" />
          <ScriptRow title="이미지 전체 매치" checked />
        </div>
        <div className="flex h-[22px] flex-none pt-[2px] text-black">
          <button className="h-[19px] w-[79px] bg-white leading-[18px] whitespace-nowrap">에디터 보기</button>
          <button className="h-[18px] w-[61px] border border-[#d5d9df] bg-[#f0f0f0] leading-[14px] whitespace-nowrap">소스 보기</button>
        </div>
      </div>
    </section>
  );
}

function OutputPanel() {
  const [lines, setLines] = useState(1000);
  const [path, setPath] = useState("C:\\Users\\ngmas\\Documents\\NGM6\\");

  return (
    <section className="flex h-[199px] flex-none flex-col border border-[#8ba4c8] bg-[#bbcde5]">
      <PanelHeader title="아웃풋" />
      <div className="flex h-[29px] flex-none items-center gap-[6px] pr-2 pl-[3px]">
        <IconButton label="지우기">
          <svg width="16" height="16" viewBox="0 0 16 16" fill="none" stroke="#000" strokeWidth="1.300">
            <path d="M15.500 0.500L11 6.500M7.500 5L13.500 9.500M8 5.500C7 9 4 10.500 2 11C4 14.500 8 15.500 11 14.500C13 13 13.500 11 13 9M6 14L8 11.500" />
            <path d="M0.500 3H2M3 5.500H4.500M1 7H2" />
          </svg>
        </IconButton>
        <IconButton label="파일 확인">
          <svg width="15" height="16" viewBox="0 0 15 16" fill="none" stroke="#000" strokeWidth="1.500">
            <path d="M6 14.500H1.500V1H8L12.500 5.500V8M8 1V5.500H12" />
            <circle cx="11" cy="12" r="3.500" fill="#000" stroke="none" />
            <path d="M9.300 12L10.600 13.300L12.800 10.800" stroke="#fff" strokeWidth="1" />
          </svg>
        </IconButton>
        <IconButton label="줄 바꿈">
          <svg width="13" height="12" viewBox="0 0 13 12"><path d="M0 1H13M0 4.300H13M0 7.600H13M0 11H13" stroke="#000" strokeWidth="1.300" /></svg>
        </IconButton>
        <span className="h-5 w-[2px] border-r border-white bg-[#9aa5b5]" />
        <IconButton label="비우기"><FaEraser size={14} /></IconButton>
        <div className="flex h-[21px] w-[70px] flex-none items-center border border-[#a3bad8] bg-white pr-px">
          <input
            aria-label="최대 줄 수"
            value={lines}
            onChange={(e) => setLines(Number(e.target.value) || 0)}
            className="h-full w-0 min-w-0 flex-1 pl-px text-[11px] outline-none"
          />
          <span className="flex flex-col">
            <button aria-label="증가" onClick={() => setLines(lines + 1)} className="flex h-[9px] w-4 items-center justify-center border border-[#a3bad8] bg-[#e2ecf8]">
              <svg width="5" height="3" viewBox="0 0 5 3"><path d="M2.500 0L5 3H0Z" /></svg>
            </button>
            <button aria-label="감소" onClick={() => setLines(lines - 1)} className="flex h-[9px] w-4 items-center justify-center border border-[#a3bad8] bg-[#e2ecf8]">
              <svg width="5" height="3" viewBox="0 0 5 3"><path d="M0 0H5L2.500 3Z" /></svg>
            </button>
          </span>
        </div>
        <span className="h-5 w-[2px] border-r border-white bg-[#9aa5b5]" />
        <IconButton label="저장"><MdSave size={17} /></IconButton>
        <IconButton label="열기"><FaRegFolderOpen size={17} /></IconButton>
        <input
          aria-label="경로"
          value={path}
          onChange={(e) => setPath(e.target.value)}
          className="h-5 min-w-0 flex-1 border border-[#a3bad8] bg-white px-px text-[11px] outline-none"
        />
      </div>
      <div className="min-h-0 flex-1 border-t border-[#a9bdd9] bg-white" />
    </section>
  );
}

/* ---------- properties ---------- */

type Prop = { name: string; value?: string; bold?: boolean; expand?: boolean; category?: boolean; selected?: boolean };

const props: Prop[] = [
  { name: "대상 이미지", value: "False" },
  { name: "매치 옵션", value: "SqDiffNormed" },
  { name: "비교 간격", value: "100" },
  { name: "비교 횟수", value: "1" },
  { name: "에러 처리", value: "None" },
  { name: "원본 비교", value: "False" },
  { name: "원본 이미지", value: "False" },
  { name: "이미지 선택" },
  { name: "이미지 선택", value: "None" },
  { name: "이미지 순서" },
  { name: "이미지 이름", value: "New Image", bold: true },
  { name: "이미지 인덱스", value: "0" },
  { name: "이미지 텍스트" },
  { name: "임계값", value: "15" },
  { name: "정확도 증감", value: "0" },
  { name: "조건 설정", value: "0" },
  { name: "찾기 영역", value: "0, 0, 0, 0", expand: true },
  { name: "찾을 좌표", value: "0, 0", expand: true, selected: true },
  { name: "픽셀 포멧", value: "DontCare" },
  { name: "조건 설정", category: true },
  { name: "같음" },
  { name: "다름" },
];

function Properties() {
  return (
    <section className="flex w-[200px] flex-none flex-col">
      <div className="flex min-h-0 flex-1 flex-col border border-[#8ba4c8] bg-[#f0f0f0] font-['Liberation_Sans','Noto_Sans_CJK_KR',sans-serif] text-black">
        <div className="font-['Open_Sans','Noto_Sans_CJK_KR',sans-serif]">
          <PanelHeader title="속성" />
        </div>
        <div className="flex h-6 flex-none items-center pl-[2px]">
          <button aria-label="항목별" className="flex h-[22px] w-[22px] items-center justify-center border border-[#99ccff] bg-[#cce4fa]">
            <svg width="16" height="16" viewBox="0 0 16 16">
              <path d="M0.500 1.500H5.500V6.500H0.500ZM0.500 9.500H5.500V14.500H0.500Z" fill="#fff" stroke="#3c6ca8" />
              <path d="M2 4H4M3 3V5M2 12H4M3 11V13" stroke="#000" />
              <path d="M8 2.500H11M12.500 2.500H15.500M8 5H11M12.500 5H15.500M8 10.500H11M12.500 10.500H15.500M8 13H11M12.500 13H15.500" stroke="#7b8794" />
            </svg>
          </button>
          <button aria-label="사전순" className="flex h-[22px] w-[22px] items-center justify-center">
            <span className="flex flex-col text-[9px] leading-[9px] font-bold">
              <span className="text-[#2b6cb8]">A</span>
              <span className="text-[#b8323c]">Z</span>
            </span>
            <svg width="7" height="14" viewBox="0 0 7 14"><path d="M3.500 0V12M1 9.500L3.500 12.500L6 9.500" fill="none" stroke="#222" strokeWidth="1.300" /></svg>
          </button>
          <span className="mx-[5px] h-5 w-px bg-[#999]" />
          <button aria-label="속성 페이지">
            <svg width="16" height="15" viewBox="0 0 16 15">
              <rect x="0.500" y="0.500" width="15" height="14" fill="#ddd" stroke="#b5b5b5" />
              <path d="M1 2H15" stroke="#aaa" strokeWidth="2" />
              <path d="M3 8V6H6V8M3 8.500H13V12.500H3Z" stroke="#bbb" fill="#eee" />
              <path d="M5 10.500H11" stroke="#aaa" />
            </svg>
          </button>
        </div>

        <div className="flex min-h-0 flex-1 border border-[#a0a0a0] bg-white">
          <div className="min-h-0 min-w-0 flex-1 overflow-hidden">
            <table className="w-full table-fixed border-collapse">
              <colgroup>
                <col className="w-[20px]" />
                <col className="w-[60px]" />
                <col />
              </colgroup>
              <tbody>
                {props.map((p, i) => (
                  <tr key={i} className={`h-[17px] ${p.category ? "bg-[#f3f6fb]" : ""}`}>
                    <td className="bg-[#f3f6fb] p-0">
                      {p.expand && (
                        <svg width="6" height="8" viewBox="0 0 6 8" className="mx-auto"><path d="M1 0.500L5 4L1 7.500" fill="none" stroke="#999" strokeWidth="1.500" /></svg>
                      )}
                      {p.category && (
                        <svg width="9" height="6" viewBox="0 0 9 6" className="mx-auto"><path d="M1 1L4.500 4.500L8 1" fill="none" stroke="#444" strokeWidth="1.500" /></svg>
                      )}
                    </td>
                    <td className={`border-b border-[#f0f3f8] p-0 ${p.selected ? "bg-[#f0f3f8]" : ""}`}>
                      <div className={`h-4 overflow-hidden pl-1 leading-4 whitespace-nowrap ${p.category ? "font-bold" : ""}`}>{p.name}</div>
                    </td>
                    <td className="border-b border-l border-[#f0f3f8] p-0">
                      <div className={`h-4 overflow-hidden pl-1 leading-4 whitespace-nowrap ${p.bold ? "font-bold" : "text-xs leading-4!"}`}>{p.value}</div>
                    </td>
                  </tr>
                ))}
              </tbody>
            </table>
          </div>
          <div className="flex w-[17px] flex-none flex-col items-center bg-[#f0f0f0] pt-[5px] pb-[3px]">
            <Chevron dir="up" />
            <span className="flex-1" />
            <span className="mb-[3px] h-[104px] w-[15px] bg-[#cdcdcd]" />
            <Chevron dir="down" />
          </div>
        </div>

        <div className="mt-[3px] h-[59px] flex-none border border-[#999] pt-px pr-3 pl-1">
          <h3 className="leading-[15px] font-bold">찾을 좌표</h3>
          <p className="pt-[2px] leading-3">가깝거나 먼 아이템을 찾기 위한 좌표를 입력합니다.</p>
        </div>
      </div>
      <div className="flex h-[23px] flex-none overflow-hidden">
        <BottomTab label="속" active className="w-[38px]">
          <svg width="16" height="16" viewBox="0 0 16 16" className="flex-none">
            <rect x="0.500" y="1.500" width="14" height="11" fill="#fff" stroke="#9ebddb" />
            <rect x="0.500" y="1.500" width="14" height="3" fill="#99ccff" />
            <path d="M3 7H9M3 9.500H8" stroke="#9ebddb" />
            <circle cx="11.500" cy="11" r="3" fill="#e9f3fc" stroke="#6f9cc8" />
          </svg>
        </BottomTab>
        <BottomTab label="스크..." className="w-[57px] pl-px!">
          <svg width="16" height="15" viewBox="0 0 16 15" className="flex-none">
            <rect x="0.500" y="0.500" width="13" height="12" fill="#fff" stroke="#9ebddb" />
            <rect x="0.500" y="0.500" width="13" height="3" fill="#99ccff" />
            <path d="M3 6H11M3 8.500H8" stroke="#9ebddb" />
            <rect x="9.500" y="8.500" width="6" height="6" fill="#d7e8f8" stroke="#8fb4d9" />
          </svg>
        </BottomTab>
        <BottomTab label="이..." className="w-[47px] pl-[2px]!">
          <svg width="16" height="13" viewBox="0 0 16 13" className="flex-none">
            <rect x="0.500" y="0.500" width="15" height="12" fill="#8cc4f5" stroke="#7fb2e0" />
            <path d="M2 12V9L6 5L8 7.500L10 7L12 5L14 8V12Z" fill="#fff" />
          </svg>
        </BottomTab>
        <BottomTab label="외..." className="w-[57px] pl-[2px]!">
          <span className="flex h-[11px] w-4 flex-none items-center justify-center border border-[#6b9bc9] bg-[#cfe3f6] text-[7px] leading-none font-bold text-[#5a7fa8]">API</span>
        </BottomTab>
      </div>
    </section>
  );
}

/* ---------- main window ---------- */

function MacroWindow() {
  const [tab, setTab] = useState("스크립트");

  return (
    <section className="flex min-w-0 flex-1 flex-col border-2 border-[#1a78cc] bg-white">
      <div className="flex h-[28px] flex-none items-center pl-[5px]">
        <QuickAccessArrow />
        <span className="ml-[17px] flex-1 text-xs text-black">NGMsoftware</span>
        <WindowButtons />
      </div>

      <nav className="flex h-[27px] flex-none items-end border-b border-[#9db3d1]">
        <button className="ml-px h-[25px] w-[56px] rounded-t-sm border border-b-0 border-[#1560a8] bg-[radial-gradient(ellipse_at_bottom,#5fa3e0_0%,#4a95da_45%,#1979ca_50%)] text-xs text-white">File</button>
        <div className="flex items-end pl-1">
          {menuTabs.map((name) => (
            <button
              key={name}
              onClick={() => setTab(name)}
              className={`h-[25px] px-3 whitespace-nowrap text-[#222] ${
                tab === name
                  ? "-mb-px rounded-t border border-b-0 border-[#9db3d1] bg-[#eff5fc]"
                  : "border-x border-transparent"
              }`}
            >
              {name}
            </button>
          ))}
        </div>
        <span className="flex-1" />
        <span className="mr-[10px] mb-2">
          <svg width="9" height="7" viewBox="0 0 9 7"><path d="M0.500 3.500L4.500 0.500L8.500 3.500V6H6L4.500 4.500L3 6H0.500Z" fill="#fff" stroke="#333" /></svg>
        </span>
      </nav>

      <Ribbon />

      <div className="flex min-h-0 flex-1 gap-[6px] bg-[#bbcde5] pt-[3px] pb-[2px]">
        <Toolbox />
        <div className="flex min-w-0 flex-1 flex-col gap-[6px]">
          <ScriptEditor />
          <OutputPanel />
        </div>
        <Properties />
      </div>

      <footer className="flex h-[21px] flex-none items-center border-t border-[#8ba4c8] bg-linear-to-b from-[#dbe6f4] to-[#b4c5dc] pr-1 pl-1 text-xs text-[#1e395b]">
        <span className="flex-1">admin</span>
        <span className="mr-[5px] text-[11px]">00:12:20</span>
        <span className="self-end pb-[3px]"><Grip /></span>
      </footer>
    </section>
  );
}

function App() {
  return (
    <main className="flex h-screen min-w-[1200px] overflow-hidden bg-[#00adf5] font-['Open_Sans','Noto_Sans_CJK_KR',sans-serif] text-[13px]">
      <div className="w-[380px] flex-none bg-[linear-gradient(215deg,#0a9bea_0%,#00a6f4_45%,#00aefa_70%,#009ff0_100%)] pt-[2px] pl-[3px]">
        <PaintWindow />
      </div>
      <MacroWindow />
    </main>
  );
}

export default App;
